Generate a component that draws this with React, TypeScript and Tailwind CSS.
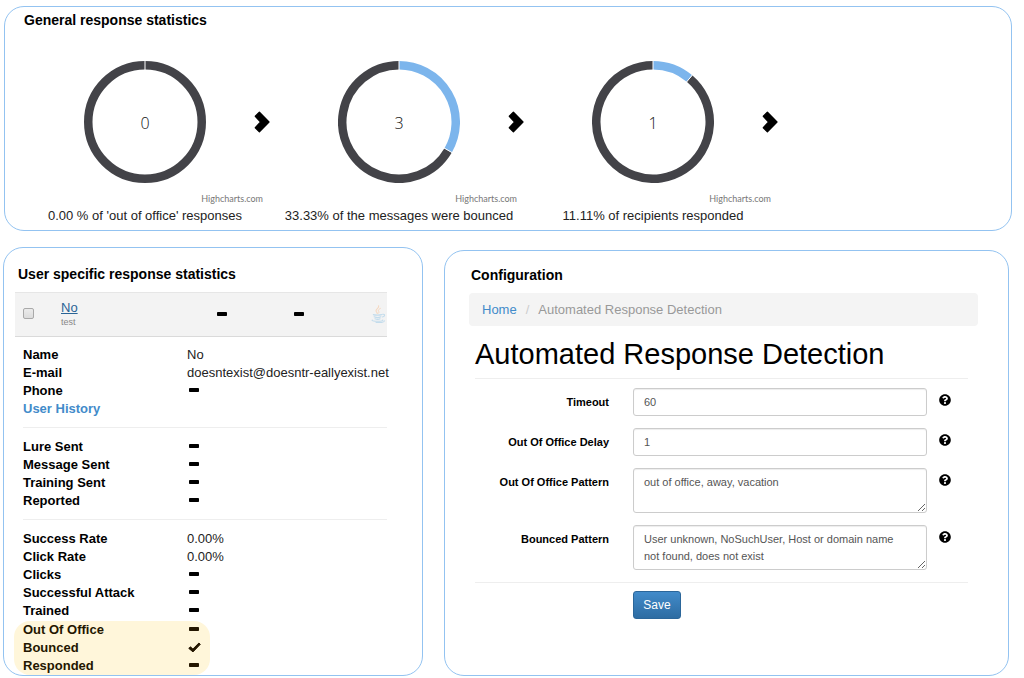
import React from "react";
import { FaQuestionCircle } from "react-icons/fa";

const panel = "rounded-[20px] border border-[#93c3f1] bg-white";

function Dash() {
  return (
    <svg viewBox="0 0 10 4" className="h-1 w-2.5" role="img" aria-label="none">
      <rect width="10" height="4" rx="0.8" fill="currentColor" />
    </svg>
  );
}

function Check() {
  return (
    <svg viewBox="0 0 13 11" className="h-[11px] w-[13px]" role="img" aria-label="yes">
      <path
        d="M0.8 6.4 2.4 4.8 4.9 7 10.9 1 12.3 2.3 5 9.9Z"
        fill="currentColor"
        stroke="currentColor"
        strokeWidth="1"
        strokeLinejoin="round"
      />
    </svg>
  );
}

function Chevron() {
  return (
    <svg viewBox="0 0 16 22" className="h-[22px] w-4" aria-hidden="true">
      <path d="M5.4 1.1 15 11 5.4 20.9 1.3 16.8 6.6 11 1.3 5.2Z" fill="#000" stroke="#000" strokeWidth="1.3" strokeLinejoin="round" />
    </svg>
  );
}

function JavaCup() {
  return (
    <svg viewBox="0 0 15 18" className="h-[18px] w-[15px]" fill="none" strokeLinecap="round" aria-hidden="true">
      <path d="M7.6 0.8C8.6 3 4.6 4 5 6C5.2 7 6.4 7.6 6.2 8.6" stroke="#f5d8c0" strokeWidth="1.1" />
      <path d="M9.4 3.4C7 4.6 7 5.6 7.8 6.6C8.2 7.4 7.6 8 7.2 8.4" stroke="#f5d8c0" strokeWidth="1" />
      <path d="M2.4 9.6C4 10.3 8.6 10.3 10.6 9.6M3.2 11.8C5 12.6 8.4 12.6 9.8 11.8M4 13.8C5.4 14.4 8 14.4 9 13.8" stroke="#c3dcec" strokeWidth="1.2" />
      <path d="M11.6 9.3C14.4 8.8 14.2 11.4 11.4 12M1.2 15C0.4 16 4 16.4 7 16.3C10 16.3 12.4 15.8 11.8 15M5 17.5C9 17.8 13.4 17.3 13.6 15.8" stroke="#c3dcec" strokeWidth="1.1" />
    </svg>
  );
}

function Donut({ share, value }: { share: number; value: string }) {
  const c = 61;
  const outer = 61;
  const inner = 52.5;
  const angle = share * Math.PI * 2;
  const dx = Math.sin(angle);
  const dy = -Math.cos(angle);
  const r = (outer + inner) / 2;
  const band = outer - inner;
  const end = `${c + dx * r} ${c + dy * r}`;
  return (
    <svg viewBox="0 0 122 122" className="h-[122px] w-[122px]" role="img" aria-label={value}>
      {share > 0 ? (
        <>
          <path d={`M${end}A${r} ${r} 0 1 1 ${c} ${c - r}`} fill="none" stroke="#434348" strokeWidth={band} />
          <path d={`M${c} ${c - r}A${r} ${r} 0 0 1 ${end}`} fill="none" stroke="#7cb5ec" strokeWidth={band} />
          <path
            d={`M${c + dx * 52} ${c + dy * 52}L${c + dx * 61.5} ${c + dy * 61.5}`}
            stroke="#fff"
            strokeWidth="1"
          />
        </>
      ) : (
        <circle cx={c} cy={c} r={r} fill="none" stroke="#434348" strokeWidth={band} />
      )}
      <path d={`M${c} 0V9.5`} stroke="#fff" strokeWidth="1" />
      <text x={c} y="68" textAnchor="middle" fill="#111" className="font-['Open_Sans',sans-serif] text-base font-light">
        {value}
      </text>
    </svg>
  );
}

const charts = [
  { value: "0", share: 0, caption: "0.00 % of 'out of office' responses" },
  { value: "3", share: 0.3333, caption: "33.33% of the messages were bounced" },
  { value: "1", share: 0.1111, caption: "11.11% of recipients responded" },
];

function GeneralStats() {
  return (
    <section className={`${panel} mr-2 h-[225px]`}>
      <h2 className="pt-1 pl-[19px] text-sm leading-[18px] font-bold">General response statistics</h2>
      <div className="mt-8 grid grid-cols-[repeat(3,minmax(0,254px))] pl-[13px]">
        {charts.map((chart) => (
          <figure key={chart.value}>
            <div className="grid grid-cols-[1fr_122px_1fr] items-center">
              <span />
              <Donut share={chart.share} value={chart.value} />
              <span className="mr-0.5 justify-self-end">
                <Chevron />
              </span>
            </div>
            <p className="mt-2.5 mr-[9px] text-right font-[Lato,sans-serif] text-[9px] leading-3 text-[#777]">
              Highcharts.com
            </p>
            <figcaption className="mt-0.5 text-center text-[13px] leading-[18px] text-[#222]">{chart.caption}</figcaption>
          </figure>
        ))}
      </div>
    </section>
  );
}

type Row = [string, React.ReactNode];

const identityRows: Row[] = [
  ["Name", "No"],
  ["E-mail", "doesntexist@doesntr-eallyexist.net"],
  ["Phone", <Dash />],
];

const activityRows: Row[] = [
  ["Lure Sent", <Dash />],
  ["Message Sent", <Dash />],
  ["Training Sent", <Dash />],
  ["Reported", <Dash />],
];

const rateRows: Row[] = [
  ["Success Rate", "0.00%"],
  ["Click Rate", "0.00%"],
  ["Clicks", <Dash />],
  ["Successful Attack", <Dash />],
  ["Trained", <Dash />],
];

const responseRows: Row[] = [
  ["Out Of Office", <Dash />],
  ["Bounced", <Check />],
  ["Responded", <Dash />],
];

function Rows({ rows }: { rows: Row[] }) {
  return (
    <dl>
      {rows.map(([label, value]) => (
        <div key={label} className="flex text-[13px] leading-[18px] whitespace-nowrap">
          <dt className="w-[164px] shrink-0 font-bold">{label}</dt>
          <dd>
            {typeof value === "string" ? (
              <span className="text-[#222]">{value}</span>
            ) : (
              <span className="flex h-4 w-3.5 items-center justify-center">{value}</span>
            )}
          </dd>
        </div>
      ))}
    </dl>
  );
}

function UserStats() {
  return (
    <section className={`${panel} h-[429px] pt-[17px] pr-[35px] pl-[11px]`}>
      <h2 className="pl-[3px] text-sm leading-[18px] font-bold">User specific response statistics</h2>
      <div className="mt-[9px] flex h-[45px] items-center border-y border-t-[#e6e6e6] border-b-[#dadada] bg-[#f3f3f3] pb-0.5 pl-2">
        <input
          type="checkbox"
          aria-label="Select No"
          className="h-[11px] w-[11px] appearance-none rounded-[2px] border border-[#a9a9a9] bg-linear-to-b from-[#ebebeb] to-[#dcdcdc]"
        />
        <div className="ml-[27px] w-[156px]">
          <a href="#user" className="block text-[13px] leading-4 text-[#2a6496] underline">
            No
          </a>
          <span className="block text-[9px] leading-3 text-[#888]">test</span>
        </div>
        <Dash />
        <span className="ml-[67px]">
          <Dash />
        </span>
        <span className="mr-px ml-auto">
          <JavaCup />
        </span>
      </div>
      <div className="mt-[9px] pl-2">
        <Rows rows={identityRows} />
        <a href="#history" className="block text-[13px] leading-[18px] font-bold text-[#428bca]">
          User History
        </a>
        <hr className="mt-[9px] mb-2.5 border-[#eee]" />
        <Rows rows={activityRows} />
        <hr className="mt-[9px] mb-2.5 border-[#eee]" />
        <Rows rows={rateRows} />
      </div>
      <div className="mt-px -ml-px w-[196px] rounded-2xl bg-[#fff6da] pl-[9px] text-[#241600]">
        <Rows rows={responseRows} />
      </div>
    </section>
  );
}

const control =
  "block w-full min-w-0 flex-1 rounded-[3px] border border-[#ccc] bg-white pr-5 pl-2.5 text-[11px] text-[#555] shadow-[inset_0_1px_1px_rgba(0,0,0,0.075)]";

function Field({ id, label, value, multiline }: { id: string; label: string; value: string; multiline?: boolean }) {
  return (
    <div className="flex items-start">
      <label htmlFor={id} className="mr-6 w-[134px] shrink-0 pt-[5px] text-right text-[11px] leading-[18px] font-bold">
        {label}
      </label>
      {multiline ? (
        <textarea id={id} defaultValue={value} className={`${control} h-[45px] resize overflow-hidden py-[5px] leading-[17px]`} />
      ) : (
        <input id={id} type="text" defaultValue={value} className={`${control} h-7`} />
      )}
      <button type="button" aria-label={`Help: ${label}`} className="mt-1.5 mr-[17px] ml-3">
        <FaQuestionCircle className="h-3 w-3 text-black" />
      </button>
    </div>
  );
}

function Configuration() {
  return (
    <section className={`${panel} mt-[3px] pt-[15px] pr-[30px] pl-6`}>
      <h2 className="pl-0.5 text-sm leading-[18px] font-bold">Configuration</h2>
      <nav aria-label="Breadcrumb" className="mt-[9px] flex rounded bg-[#f4f4f4] px-[13px] text-[13px] leading-[33px]">
        <a href="#home" className="text-[#428bca]">
          Home
        </a>
        <span className="mx-[9px] text-[#ccc]">/</span>
        <span className="text-[#999]">Automated Response Detection</span>
      </nav>
      <form className="mr-2.5 ml-1.5" onSubmit={(event) => event.preventDefault()}>
        <h1 className="pt-3 pb-2 text-[29px] leading-8">Automated Response Detection</h1>
        <hr className="mb-[9px] border-[#eee]" />
        <div className="flex flex-col gap-3">
          <Field id="timeout" label="Timeout" value="60" />
          <Field id="delay" label="Out Of Office Delay" value="1" />
          <Field id="office-pattern" label="Out Of Office Pattern" value="out of office, away, vacation" multiline />
          <Field
            id="bounced-pattern"
            label="Bounced Pattern"
            value="User unknown, NoSuchUser, Host or domain name not found, does not exist"
            multiline
          />
        </div>
        <hr className="mt-3 mb-2 border-[#eee]" />
        <button
          type="submit"
          className="ml-[158px] h-7 w-12 rounded-[3px] border border-[#2b669a] bg-linear-to-b from-[#428bca] to-[#2d6ca2] text-xs text-white"
        >
          Save
        </button>
      </form>
    </section>
  );
}

export default function App() {
  return (
    <main className="bg-white pt-1.5 pr-1 pb-[3px] pl-[3px] font-['Liberation_Sans',Arial,sans-serif] text-black">
      <div className="pl-px">
        <GeneralStats />
      </div>
      <div className="mt-4 mr-[11px] grid grid-cols-[minmax(0,420fr)_minmax(0,565fr)] gap-[21px]">
        <UserStats />
        <Configuration />
      </div>
    </main>
  );
}
